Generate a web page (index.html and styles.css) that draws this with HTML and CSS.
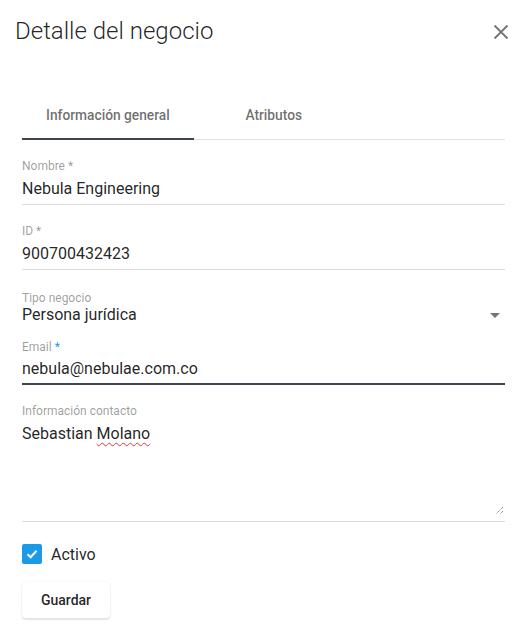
FILE: index.html
```html
<!DOCTYPE html>
<html lang="es">
<head>
<meta charset="utf-8">
<title>Detalle del negocio</title>
<link rel="stylesheet" href="styles.css">
</head>
<body>
<div class="dialog">
  <div class="header">
    <h1 class="title">Detalle del negocio</h1>
    <button class="close" aria-label="Cerrar">
      <svg width="16" height="16" viewBox="0 0 16 16"><path d="M1.5 1.5 L14.5 14.5 M14.5 1.5 L1.5 14.5" stroke="#757575" stroke-width="1.8" fill="none"/></svg>
    </button>
  </div>
  <div class="content">
    <div class="tabs">
      <div class="tab active">Información general</div>
      <div class="tab">Atributos</div>
    </div>
    <div class="field f-nombre">
      <div class="label">Nombre *</div>
      <div class="value">Nebula Engineering</div>
    </div>
    <div class="field f-id">
      <div class="label">ID *</div>
      <div class="value">900700432423</div>
    </div>
    <div class="field select f-tipo">
      <div class="label">Tipo negocio</div>
      <div class="value row"><span>Persona jurídica</span><span class="arrow"></span></div>
    </div>
    <div class="field focused f-email">
      <div class="label">Email <span class="req">*</span></div>
      <div class="value">nebula@nebulae.com.co</div>
    </div>
    <div class="field textarea f-info">
      <div class="label">Información contacto</div>
      <div class="value">Sebastian <span class="spell">Molano</span></div>
      <svg class="grip" width="10" height="10" viewBox="0 0 10 10"><path d="M9 2 L2 9 M9 6 L6 9" stroke="#666" stroke-width="1" stroke-dasharray="1 1" fill="none"/></svg>
    </div>
    <label class="check">
      <span class="box"><svg width="14" height="14" viewBox="0 0 14 14"><path d="M2.5 7.2 L5.6 10.2 L11.6 3.8" stroke="#fff" stroke-width="2" fill="none"/></svg></span>
      <span class="check-label">Activo</span>
    </label>
    <button class="save">Guardar</button>
  </div>
</div>
</body>
</html>
```
FILE: styles.css
```css
* { box-sizing: border-box; }
html, body { margin: 0; padding: 0; background: #fff; }
body { font-family: Roboto, "Noto Sans", sans-serif; color: rgba(0,0,0,.87); width: 526px; height: 631px; overflow: hidden; }
.dialog { padding: 15px 15px 0 15px; }
.header { display: flex; justify-content: space-between; align-items: center; height: 32px; }
.title { margin: 0; font-size: 24px; font-weight: 300; line-height: 32px; color: rgba(0,0,0,.87); letter-spacing: 0; }
.close { border: 0; background: none; padding: 0; width: 24px; height: 24px; display: flex; align-items: center; justify-content: center; margin-right: -2px; margin-top: 2px; }
.content { padding: 0 6px 0 7px; }
.tabs { display: flex; margin-top: 44px; border-bottom: 1px solid #e0e0e0; height: 49px; }
.tab { height: 48px; min-width: 160px; padding: 0 24px; display: flex; align-items: center; justify-content: center; font-size: 13.75px; font-weight: 500; color: rgba(0,0,0,.58); }
.tab.active { border-bottom: 2px solid #3f4451; height: 49px; padding-top: 1px; margin-bottom: -1px; }
.field { position: relative; border-bottom: 1px solid #dcdcdc; padding-bottom: 6px; }
.label { font-size: 12px; line-height: 14px; color: rgba(0,0,0,.4); }
.value { font-size: 16px; line-height: 20px; margin-top: 6px; color: rgba(0,0,0,.87); }
.f-nombre { margin-top: 19px; }
.f-nombre .value { margin-top: 6px; }
.f-nombre { padding-bottom: 5px; }
.f-id { margin-top: 19px; padding-bottom: 5px; }
.f-tipo { margin-top: 21px; border-bottom: 0; padding-bottom: 0; }
.f-tipo .value { margin-top: 0; }
.row { display: flex; justify-content: space-between; align-items: center; }
.arrow { width: 0; height: 0; border-left: 5px solid transparent; border-right: 5px solid transparent; border-top: 5px solid #757575; margin-right: 5px; }
.f-email { margin-top: 15px; border-bottom: 2px solid #3f4451; padding-bottom: 4px; }
.f-email .value { margin-top: 5px; }
.req { color: #1e9be9; }
.f-info { margin-top: 19px; height: 118px; }
.grip { position: absolute; right: 1px; bottom: 6px; }
.spell { text-decoration: underline wavy #e53935; text-decoration-thickness: 1px; text-underline-offset: 3px; }
.check { display: flex; align-items: center; margin-top: 22px; height: 20px; }
.box { width: 20px; height: 20px; border-radius: 2px; background: #1b9be6; display: flex; align-items: center; justify-content: center; }
.check-label { font-size: 16px; margin-left: 9px; color: rgba(0,0,0,.87); }
.save { margin-top: 18px; width: 88px; height: 36px; border: 0; border-radius: 4px; background: #fff; font-family: Roboto, sans-serif; font-size: 14px; font-weight: 500; color: rgba(0,0,0,.87); box-shadow: 0 2px 2px rgba(0,0,0,.1), 0 0 2px rgba(0,0,0,.08); padding: 0; }
```
